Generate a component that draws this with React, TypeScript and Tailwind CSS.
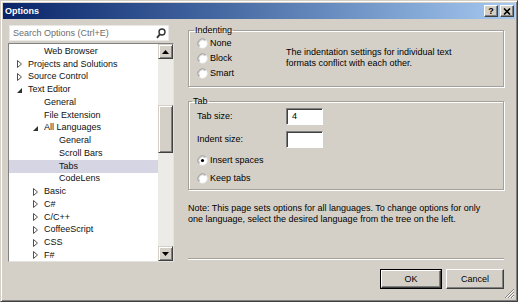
import React from "react";

type Item = { t: string; l: 1 | 2 | 3; c?: "open" | "closed"; sel?: boolean };

const items: Item[] = [
  { t: "Web Browser", l: 2 },
  { t: "Projects and Solutions", l: 1, c: "closed" },
  { t: "Source Control", l: 1, c: "closed" },
  { t: "Text Editor", l: 1, c: "open" },
  { t: "General", l: 2 },
  { t: "File Extension", l: 2 },
  { t: "All Languages", l: 2, c: "open" },
  { t: "General", l: 3 },
  { t: "Scroll Bars", l: 3 },
  { t: "Tabs", l: 3, sel: true },
  { t: "CodeLens", l: 3 },
  { t: "Basic", l: 2, c: "closed" },
  { t: "C#", l: 2, c: "closed" },
  { t: "C/C++", l: 2, c: "closed" },
  { t: "CoffeeScript", l: 2, c: "closed" },
  { t: "CSS", l: 2, c: "closed" },
  { t: "F#", l: 2, c: "closed" },
];

function Tri({ c }: { c?: "open" | "closed" }) {
  if (c === "closed")
    return (
      <svg width="6" height="8" viewBox="0 0 6 8">
        <polygon points="0.5,0.5 4.5,4 0.5,7.5" fill="#fff" stroke="#505050" strokeWidth="1" />
      </svg>
    );
  if (c === "open")
    return (
      <svg width="6" height="8" viewBox="0 0 6 8">
        <polygon points="5,2 5,7 0,7" fill="#303030" />
      </svg>
    );
  return null;
}

function Radio({ checked }: { checked?: boolean }) {
  return (
    <svg width="11" height="11" viewBox="0 0 12 12" className="shrink-0">
      <circle cx="6" cy="6" r="5" fill="#fff" />
      <path d="M2.46 9.54 A5 5 0 0 1 9.54 2.46" fill="none" stroke="#8a8a8a" strokeWidth="1" />
      <path d="M9.54 2.46 A5 5 0 0 1 2.46 9.54" fill="none" stroke="#f4f4f4" strokeWidth="1" />
      <path d="M3.17 8.83 A4 4 0 0 1 8.83 3.17" fill="none" stroke="#c8c8c8" strokeWidth="1" />
      {checked && <circle cx="6" cy="6" r="1.7" fill="#000" />}
    </svg>
  );
}

function ScrollBtn({ up }: { up?: boolean }) {
  return (
    <div className="h-[15px] w-[15px] bg-[#d4d0c8] border border-t-[#d4d0c8] border-l-[#d4d0c8] border-b-[#404040] border-r-[#404040] shadow-[inset_1px_1px_0_#fff,inset_-1px_-1px_0_#808080] flex items-center justify-center">
      <svg width="7" height="4" viewBox="0 0 7 4">
        {up ? <polygon points="0,4 7,4 3.5,0" fill="#000" /> : <polygon points="0,0 7,0 3.5,4" fill="#000" />}
      </svg>
    </div>
  );
}

const raised =
  "border border-t-white border-l-white border-b-[#404040] border-r-[#404040] shadow-[inset_-1px_-1px_0_#808080]";
const sunken =
  "bg-white border border-t-[#808080] border-l-[#808080] border-b-white border-r-white shadow-[inset_1px_1px_0_#404040]";
const etched =
  "border border-[#a4a09a] shadow-[inset_1px_1px_0_#fff,1px_1px_0_#fff]";

export default function App() {
  return (
    <div className="relative w-[518px] h-[302px] bg-[#d4d0c8] border border-t-[#d4d0c8] border-l-[#d4d0c8] border-b-[#404040] border-r-[#404040] shadow-[inset_1px_1px_0_#fff,inset_-1px_-1px_0_#808080] p-[2px] flex flex-col text-[9px] leading-[11px] text-black font-['Liberation_Sans',Arial,sans-serif] overflow-hidden">
      {/* Title bar */}
      <div className="h-[16px] bg-linear-to-r from-[#0a246a] to-[#a6caf0] flex items-center pl-[2px] pr-[1px] shrink-0">
        <span className="text-white font-bold text-[9px]">Options</span>
        <div className="ml-auto flex gap-[2px]">
          <div className={`w-[14px] h-[12px] bg-[#d4d0c8] ${raised} flex items-center justify-center font-bold text-[9px] leading-none`}>?</div>
          <div className={`w-[14px] h-[12px] bg-[#d4d0c8] ${raised} flex items-center justify-center`}>
            <svg width="8" height="7" viewBox="0 0 8 7">
              <path d="M1 0.5 L7 6.5 M7 0.5 L1 6.5" stroke="#000" strokeWidth="1.6" />
            </svg>
          </div>
        </div>
      </div>

      {/* Body */}
      <div className="flex flex-1">
        {/* Left column */}
        <div className="ml-[5px] w-[166px] flex flex-col">
          <div className="mt-[6px] ml-[1px] w-[160px] h-[16px] bg-white border border-[#ebe9e5] flex items-center pl-[3px] pr-[2px]">
            <span className="text-[#6d6d6d]">Search Options (Ctrl+E)</span>
            <svg className="ml-auto" width="10" height="11" viewBox="0 0 10 11">
              <circle cx="6" cy="4" r="3" fill="none" stroke="#333" strokeWidth="1.4" />
              <path d="M4 6.2 L1 9.8" stroke="#333" strokeWidth="1.8" />
            </svg>
          </div>
          <div className="mt-[2px] w-[166px] h-[219px] bg-white border border-t-[#828282] border-l-[#828282] border-b-[#e4e2de] border-r-[#e4e2de] flex">
            <div className="flex-1 pt-[1px] overflow-hidden">
              {items.map((it, i) => (
                <div
                  key={i}
                  className={`h-[12.75px] flex items-center text-[#111] ${it.sel ? "bg-[#d5d5e3]" : ""} ${
                    it.l === 1 ? "pl-[8px]" : it.l === 2 ? "pl-[24px]" : "pl-[39px]"
                  }`}
                >
                  <span className="w-[11px] shrink-0 flex items-center">
                    <Tri c={it.c} />
                  </span>
                  <span className="whitespace-nowrap">{it.t}</span>
                </div>
              ))}
            </div>
            <div className="w-[15px] flex flex-col bg-[#ecebe7]">
              <ScrollBtn up />
              <div className="flex-1">
                <div className={`mt-[46px] h-[48px] bg-[#d4d0c8] border border-t-[#d4d0c8] border-l-[#d4d0c8] border-b-[#404040] border-r-[#404040] shadow-[inset_1px_1px_0_#fff,inset_-1px_-1px_0_#808080]`} />
              </div>
              <ScrollBtn />
            </div>
          </div>
        </div>

        {/* Right column */}
        <div className="ml-[14px] w-[316px] flex flex-col">
          <fieldset className={`mt-[6px] h-[62px] ${etched}`}>
            <legend className="ml-[5px] px-[1px] leading-[11px]">Indenting</legend>
            <div className="flex">
              <div className="pl-[8px] w-[97px] flex flex-col">
                {["None", "Block", "Smart"].map((t) => (
                  <div key={t} className="h-[15px] flex items-center gap-[2px]">
                    <Radio />
                    <span>{t}</span>
                  </div>
                ))}
              </div>
              <div className="mt-[11px] leading-[11px]">
                The indentation settings for individual text
                <br />
                formats conflict with each other.
              </div>
            </div>
          </fieldset>

          <fieldset className={`mt-[9px] h-[94px] ${etched}`}>
            <legend className="ml-[3px] px-[1px] leading-[11px]">Tab</legend>
            <div className="pl-[8px] flex flex-col">
              <div className="h-[17px] flex items-center mt-[0.5px]">
                <span className="w-[89px]">Tab size:</span>
                <div className={`w-[37px] h-[17px] ${sunken} flex items-center pl-[5px]`}>4</div>
              </div>
              <div className="h-[17px] flex items-center mt-[6px]">
                <span className="w-[89px]">Indent size:</span>
                <div className={`w-[37px] h-[17px] ${sunken}`} />
              </div>
              <div className="h-[15px] flex items-center gap-[2px] mt-[5.5px]">
                <Radio checked />
                <span>Insert spaces</span>
              </div>
              <div className="h-[15px] flex items-center gap-[2px] mt-[3px]">
                <Radio />
                <span>Keep tabs</span>
              </div>
            </div>
          </fieldset>

          <div className="mt-[13px] leading-[11px]">
            Note: This page sets options for all languages. To change options for only
            <br />
            one language, select the desired language from the tree on the left.
          </div>

          <div className="mt-[33px] h-[2px] border-t border-[#a4a09a] border-b border-b-white" />

          <div className="mt-[9px] flex justify-end gap-[4px] pr-[0px]">
            <div className="w-[62px] h-[20px] border border-black">
              <div className={`w-full h-full bg-[#d4d0c8] ${raised} flex items-center justify-center`}>OK</div>
            </div>
            <div className={`w-[58px] h-[20px] bg-[#d4d0c8] ${raised} flex items-center justify-center`}>Cancel</div>
          </div>
        </div>
      </div>

      {/* resize grip */}
      <svg className="absolute right-[2px] bottom-[2px]" width="12" height="12" viewBox="0 0 12 12">
        <path d="M11 2 L2 11 M11 5 L5 11 M11 8 L8 11" stroke="#808080" strokeWidth="1" />
        <path d="M11 3 L3 11 M11 6 L6 11 M11 9 L9 11" stroke="#fff" strokeWidth="1" />
      </svg>
    </div>
  );
}
